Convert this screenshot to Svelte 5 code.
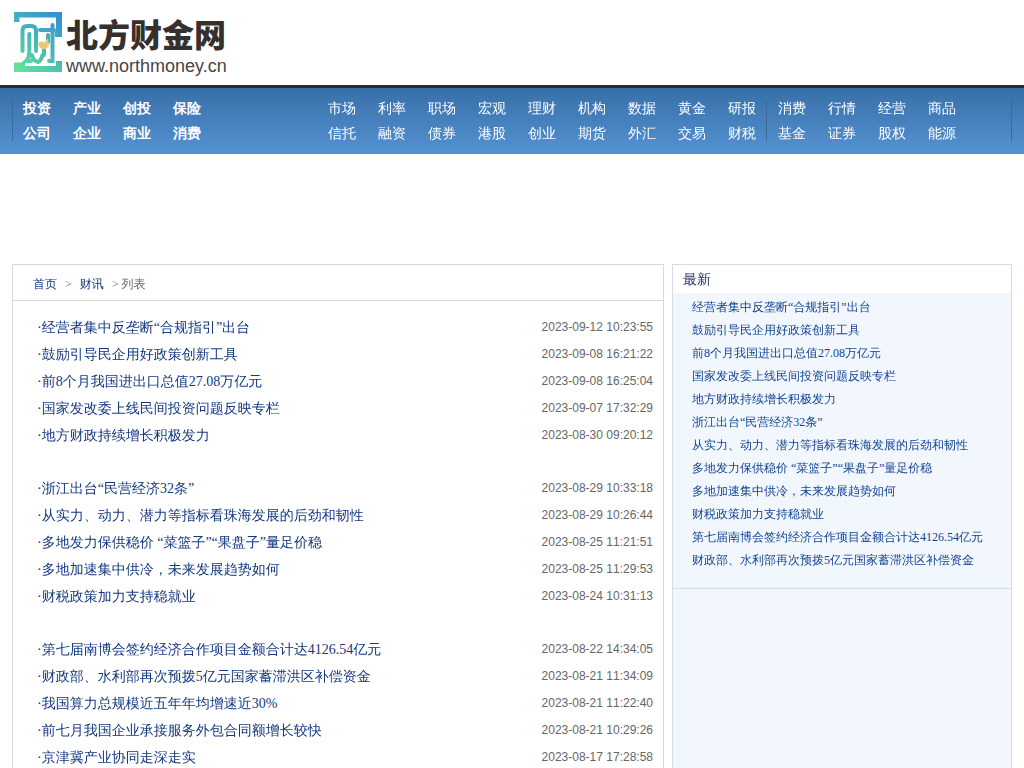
<script lang="ts">
  const lead = [
    ['投资', '产业', '创投', '保险'],
    ['公司', '企业', '商业', '消费'],
  ];
  const middle = [
    ['市场', '利率', '职场', '宏观', '理财', '机构', '数据', '黄金', '研报'],
    ['信托', '融资', '债券', '港股', '创业', '期货', '外汇', '交易', '财税'],
  ];
  const last = [
    ['消费', '行情', '经营', '商品'],
    ['基金', '证券', '股权', '能源'],
  ];

  const navGroups = [
    { name: 'lead', rows: lead },
    { name: 'middle', rows: middle },
    { name: 'last', rows: last },
  ];

  const articles = [
    { title: '经营者集中反垄断“合规指引”出台', date: '2023-09-12 10:23:55' },
    { title: '鼓励引导民企用好政策创新工具', date: '2023-09-08 16:21:22' },
    { title: '前8个月我国进出口总值27.08万亿元', date: '2023-09-08 16:25:04' },
    { title: '国家发改委上线民间投资问题反映专栏', date: '2023-09-07 17:32:29' },
    { title: '地方财政持续增长积极发力', date: '2023-08-30 09:20:12' },
    { title: '浙江出台“民营经济32条”', date: '2023-08-29 10:33:18' },
    { title: '从实力、动力、潜力等指标看珠海发展的后劲和韧性', date: '2023-08-29 10:26:44' },
    { title: '多地发力保供稳价 “菜篮子”“果盘子”量足价稳', date: '2023-08-25 11:21:51' },
    { title: '多地加速集中供冷，未来发展趋势如何', date: '2023-08-25 11:29:53' },
    { title: '财税政策加力支持稳就业', date: '2023-08-24 10:31:13' },
    { title: '第七届南博会签约经济合作项目金额合计达4126.54亿元', date: '2023-08-22 14:34:05' },
    { title: '财政部、水利部再次预拨5亿元国家蓄滞洪区补偿资金', date: '2023-08-21 11:34:09' },
    { title: '我国算力总规模近五年年均增速近30%', date: '2023-08-21 11:22:40' },
    { title: '前七月我国企业承接服务外包合同额增长较快', date: '2023-08-21 10:29:26' },
    { title: '京津冀产业协同走深走实', date: '2023-08-17 17:28:58' },
  ];

  // the list is shown in blocks of five
  const blocks = [0, 5, 10].map((i) => articles.slice(i, i + 5));
  const latest = articles.slice(0, 12);
</script>

<header class="top">
  <a class="logo" href="#home">
    <svg width="48" height="60" viewBox="0 0 48 60" fill="none" aria-hidden="true">
      <defs>
        <linearGradient id="mark" gradientUnits="userSpaceOnUse" x1="2" y1="58" x2="46" y2="2">
          <stop offset="0" stop-color="#66e39a" />
          <stop offset="0.5" stop-color="#49b6b8" />
          <stop offset="1" stop-color="#338fd8" />
        </linearGradient>
      </defs>
      <g stroke="url(#mark)">
        <path d="M0 2.5H45V22H41M2.500 2.500V10M0 57H45V49M0 53.500H11" stroke-width="6" />
        <path d="M8.500 39V19Q8.500 14 13 14H17Q22 14 22 19V39M15.300 22V40Q15 46 12 49H17M18 43Q19 49 24 50Q27 49 28.500 43" stroke-width="4" stroke-linecap="round" />
        <path d="M26 18H40M38.500 13V49H35M34 23V30M30 36V43" stroke-width="4" stroke-linecap="round" />
      </g>
      <path d="M24 31L28 29L30 31L34 26L35 33Q33 38 28 37Q25 36 24 31Z" fill="#e8c873" />
    </svg>
    <span class="brand">
      <strong>北方财金网</strong>
      <small>www.northmoney.cn</small>
    </span>
  </a>
</header>

<nav class="nav">
  <div class="nav-inner">
    {#each navGroups as group}
      <div class="group {group.name}">
        {#each group.rows as row}
          <ul>
            {#each row as item}
              <li><a href="#{item}">{item}</a></li>
            {/each}
          </ul>
        {/each}
      </div>
    {/each}
  </div>
</nav>

<div class="main">
  <main class="list">
    <div class="crumbs">
      <a href="#home">首页</a><span class="sep">&gt;</span><a href="#news">财讯</a><span class="current">&gt; 列表</span>
    </div>
    <div class="blocks">
      {#each blocks as block}
        <ul>
          {#each block as article}
            <li>
              <a href="#article">·{article.title}</a>
              <time>{article.date}</time>
            </li>
          {/each}
        </ul>
      {/each}
    </div>
  </main>

  <aside class="side">
    <h2>最新</h2>
    <ul>
      {#each latest as article}
        <li><a href="#article">{article.title}</a></li>
      {/each}
    </ul>
  </aside>
</div>

<style>
  :global(body) {
    margin: 0;
    background: #fff;
    font: 12px/1.5 "Liberation Serif", "WenQuanYi Zen Hei", "Noto Sans CJK TC", serif;
    font-kerning: none;
    color: #666;
  }
  ul { list-style: none; margin: 0; padding: 0; }
  a { color: #14387f; text-decoration: none; }
  a:hover { text-decoration: underline; }

  .top { height: 73px; padding: 12px 14px 0; }
  .logo { display: inline-flex; gap: 4px; color: #352f2e; }
  .logo:hover { text-decoration: none; }
  .brand { display: flex; flex-direction: column; }
  .brand strong { font: 900 32px/42px "Noto Sans CJK SC", sans-serif; }
  .brand small { font: 18px/24px "Liberation Sans", sans-serif; color: #4a4444; }

  .nav { border-top: 3px solid #2b2b2b; background: linear-gradient(#386fa7, #5592d3); padding: 8px 12px; }
  .nav-inner { display: flex; }
  .group { box-sizing: border-box; padding-left: 11px; }
  .group ul { display: flex; gap: 22px; }
  .group a { display: block; font-size: 14px; line-height: 25px; color: #fff; white-space: nowrap; }
  .lead { width: 304px; background: linear-gradient(#3a6a9c, #3a6a9c) left / 1px 40px no-repeat; }
  .lead a { font-family: "Liberation Serif", serif; font-weight: bold; }
  .middle { width: 450px; padding-left: 12px; }
  .last {
    flex: 1;
    padding-left: 12px;
    background:
      linear-gradient(#3a6a9c, #3a6a9c) left / 1px 40px no-repeat,
      linear-gradient(#3a6a9c, #3a6a9c) right / 1px 40px no-repeat;
  }

  .main { display: flex; gap: 8px; padding: 110px 12px 0; }
  .list { flex: 1; border: 1px solid #d9d9d9; }
  .crumbs { padding: 4px 20px 0; line-height: 31px; border-bottom: 1px solid #d9d9d9; }
  .crumbs .sep { margin: 0 8px; }
  .crumbs .current { margin-left: 8px; }
  .blocks { display: flex; flex-direction: column; gap: 26px; padding: 13px 10px 40px 24px; }
  .blocks li { display: flex; justify-content: space-between; line-height: 27px; }
  .blocks a { font-size: 14px; }
  time { font-family: "Liberation Sans", sans-serif; }

  .side { width: 338px; border: 1px solid #d5dce9; background: #f2f7fe; }
  .side h2 { margin: 0; padding: 1px 10px 0; background: #fff; font-size: 14px; font-weight: normal; line-height: 27px; color: #1d2f5e; }
  .side ul { padding: 3px 19px 16px; border-bottom: 1px solid #d5dce9; }
  .side li { line-height: 23px; white-space: nowrap; }
  .side a { color: #124390; }
</style>
